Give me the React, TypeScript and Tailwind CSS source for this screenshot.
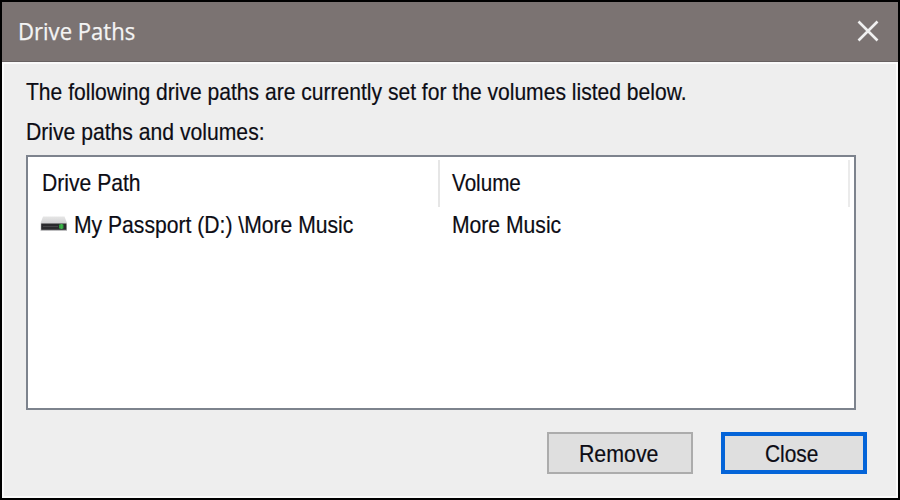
import React from "react";

function DriveIcon() {
  return (
    <svg width="28" height="18" viewBox="0 0 28 18" className="shrink-0">
      <defs>
        <linearGradient id="lid" x1="0" y1="0" x2="0" y2="1">
          <stop offset="0" stopColor="#e6e6e6" />
          <stop offset="1" stopColor="#bcbcbe" />
        </linearGradient>
      </defs>
      <path d="M3 0.5H24.5L27 7V15H0.6V7Z" fill="url(#lid)" />
      <rect x="1.2" y="7.5" width="25.2" height="6.3" fill="#2a2a2c" />
      <rect x="3" y="10" width="15" height="1" fill="#454547" />
      <rect x="19" y="8.5" width="4.5" height="4" fill="#2f9c3c" />
      <rect x="20.5" y="8" width="2" height="5" fill="#3db54a" />
    </svg>
  );
}

function Label({ className = "origin-left", children }: { className?: string; children: React.ReactNode }) {
  return <span className={`block w-max whitespace-pre ${className}`}>{children}</span>;
}

export default function App() {
  return (
    <div className="flex h-[500px] w-[900px] flex-col border-2 border-black bg-[#eeeeee] font-['Liberation_Sans',Arial,sans-serif] text-[24px] leading-[30px] text-[#0c0c14] [-webkit-text-stroke:0.2px_#0c0c14]">
      <header className="flex h-[60px] shrink-0 items-center justify-between border-b border-[#676161] bg-[#7b7372] pr-[19px] pl-4">
        <Label className="origin-left scale-x-[0.92] pb-[2px] font-['Open_Sans',sans-serif] text-[#f4f4f4] [-webkit-text-stroke:0.25px_#f4f4f4]">Drive Paths</Label>
        <svg width="22" height="22" viewBox="0 0 22 22" fill="none" stroke="#f0f0f0" strokeWidth="2.6" className="mb-[2px]">
          <path d="M1.5 1.5L20.5 20.5M20.5 1.5L1.5 20.5" />
        </svg>
      </header>
      <main className="flex grow flex-col border-2 border-[#fafafa] pt-[13px] pr-[29px] pl-[22px]">
        <Label className="origin-left scale-x-[0.878]">The following drive paths are currently set for the volumes listed below.</Label>
        <Label className="mt-[10px] origin-left scale-x-[0.881]">Drive paths and volumes:</Label>
        <section className="mt-[8px] h-[255px] w-[830px] shrink-0 border-2 border-[#7d838d] bg-white pt-[3px]">
          <div className="flex h-[47px]">
            <div className="flex w-[412px] items-center border-r-2 border-[#e6e6e6] pb-[2px] pl-[14px]">
              <Label className="origin-left scale-x-[0.88]">Drive Path</Label>
            </div>
            <div className="flex w-[410px] items-center border-r-2 border-[#ebebeb] pb-[2px] pl-[12px]">
              <Label className="origin-left scale-x-[0.86]">Volume</Label>
            </div>
          </div>
          <div className="flex h-[36px] items-center">
            <div className="flex w-[412px] items-center gap-[6px] pl-[12px]">
              <DriveIcon />
              <Label className="origin-left scale-x-[0.88]">My Passport (D:) \More Music</Label>
            </div>
            <div className="pl-[12px]">
              <Label className="origin-left scale-x-[0.88]">More Music</Label>
            </div>
          </div>
        </section>
        <footer className="mt-[22px] flex justify-end gap-[28px]">
          <button className="flex h-[42px] w-[146px] items-center justify-center border-2 border-[#acacac] bg-[#dfdfdf] pt-[2px] pr-[3px]">
            <Label className="origin-center scale-x-[0.89]">Remove</Label>
          </button>
          <button className="flex h-[42px] w-[146px] items-center justify-center border-4 border-[#0464d8] bg-[#dfdfdf] pt-[2px] pr-[5px]">
            <Label className="origin-center scale-x-[0.87]">Close</Label>
          </button>
        </footer>
      </main>
    </div>
  );
}
